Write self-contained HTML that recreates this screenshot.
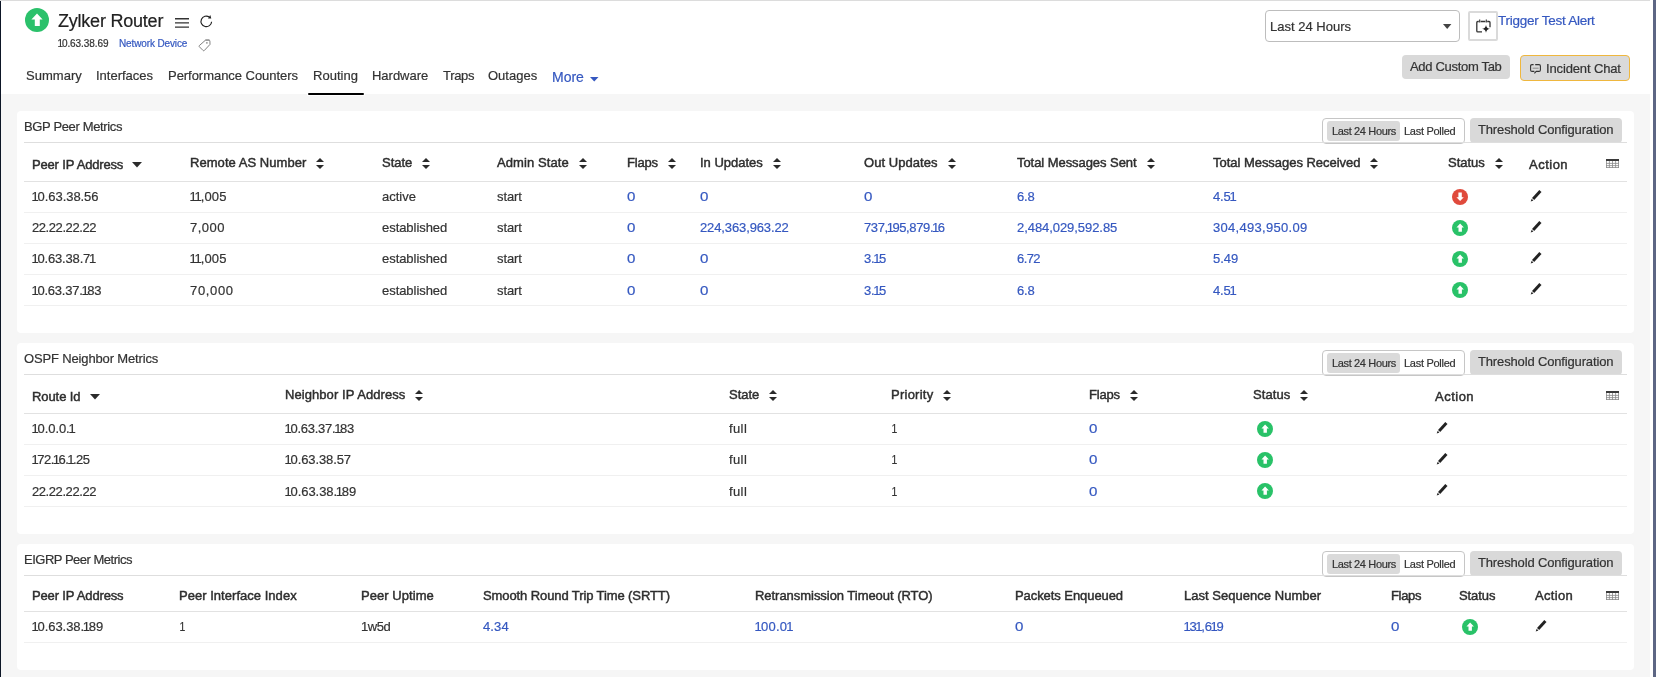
<!DOCTYPE html>
<html lang="en">
<head>
<meta charset="utf-8">
<title>Zylker Router - Routing</title>
<style>
*{box-sizing:border-box;margin:0;padding:0}
html,body{width:1656px;height:677px;overflow:hidden;background:#fff}
body{-webkit-text-stroke:.2px;position:relative;font-family:"Liberation Sans",Arial,sans-serif;font-size:13px;color:#333;-webkit-font-smoothing:antialiased}
span{white-space:nowrap}
.page{position:absolute;left:0;top:0;width:1650px;height:677px;background:#f6f6f6;overflow:hidden;will-change:transform;backface-visibility:hidden}
.topline{position:absolute;left:0;top:0;width:1650px;height:1px;background:#dcdcdc;z-index:5}
.lstrip{position:absolute;left:0;top:1px;width:1px;height:676px;background:#0d1626;z-index:6}
.lstrip2{position:absolute;left:1px;top:1px;width:1px;height:676px;background:rgba(13,22,38,.25);z-index:6}
.rstrip{position:absolute;left:1653px;top:0;width:3px;height:677px;background:#5d6684}
/* header */
.hdr{position:absolute;left:0;top:0;width:1650px;height:94px;background:#fff}
.abs{position:absolute;white-space:nowrap}
.t18{font-size:18px;line-height:22px;color:#222}
.t10{font-size:10px;line-height:12px;color:#333}
.t11{font-size:11px;line-height:14px;color:#333}
.t13{font-size:13px;line-height:16px;color:#333}
.t135{font-size:13.5px;line-height:16px}
.t14{font-size:14px;line-height:18px;color:#333}
.blue{color:#3558c0}
.hb{font-weight:bold;color:#3a3a3a}
.tab{position:absolute;top:68px;font-size:13px;line-height:16px;color:#333}
.tabline{position:absolute;left:308px;top:93px;width:56px;height:2px;background:#000;border-radius:1px;box-shadow:0 1px 0 #fff,-1px 0 0 #fff,1px 0 0 #fff,-1px 1px 0 #fff,1px 1px 0 #fff}
.btn{position:absolute;background:#d9d9d9;border-radius:4px}
/* cards */
.card{position:absolute;left:17px;width:1617px;background:#fff;border-radius:4px}
.ctitle{position:absolute;left:7px;top:0;height:31px;line-height:31px;font-size:13px;color:#333}
.cline{position:absolute;left:7px;top:31px;width:1603px;height:1px;background:#dedede}
.tgl{position:absolute;left:1305px;top:7px;width:143px;height:26px;border:1px solid #c6c6c6;border-radius:4px;background:#fff}
.tgl .on{position:absolute;left:4px;top:2px;width:73px;height:20px;background:#dadada;border-radius:3px}
.tgl>span{position:absolute;top:5px;font-size:11px;line-height:14px;color:#333}
.thr{position:absolute;left:1453px;top:7px;width:152px;height:25px;background:#d9d9d9;border-radius:4px}
.thr>span{position:absolute;left:8px;top:4px;font-size:13px;line-height:16px;color:#333}
table{position:absolute;left:7px;top:32px;width:1603px;border-collapse:separate;border-spacing:0;table-layout:fixed}
th,td{text-align:left;padding:0 0 0 8px;font-weight:normal;white-space:nowrap;overflow:visible;vertical-align:top;position:relative}
th{height:39px;line-height:38px;border-bottom:1px solid #e2e2e2}
td{height:31px;line-height:30px;border-bottom:1px solid #f0f0f0}
tr.last td>span{position:relative;top:1px}
.n1{margin:0 -1.2px}
.nf{margin-left:-.4px}
.o{display:inline-block;transform:scaleX(.8);transform-origin:30% 50%}
.z{display:inline-block;transform:scaleX(1.16);transform-origin:0 50%}
.c3 th{height:36px;line-height:35px}
.c3 .h{top:2px}
.h{font-weight:normal;color:#2e2e2e;-webkit-text-stroke:.45px #2e2e2e;position:relative;top:1px}
.lo{top:3px}
.v{color:#3558c0}
.sort{display:inline-block;width:8px;height:11px;margin-left:10px;vertical-align:-1px;position:relative;top:2px}
.caret{display:inline-block;width:10px;height:6px;margin-left:9px;vertical-align:1px;position:relative;top:3px}
.st{position:absolute;left:12px;top:7px;width:16px;height:16px}
.pen{position:absolute;left:9px;top:8.3px;width:12px;height:12px}
.c3 .pen{left:8.3px}
.c3 .st{left:10.7px}
.grid{position:absolute;left:8px;width:13px;height:9px}
svg{display:block;overflow:visible}
</style>
</head>
<body>
<div class="page">
<header class="hdr">
<svg class="abs" style="left:25px;top:8px" width="24" height="24" viewBox="0 0 24 24" aria-hidden="true"><circle cx="12" cy="12" r="12" fill="#2bc16b"/><path d="M12 5.6 17.6 11.4H14.8V18H9.8V11.4H6.4z" fill="#fff"/></svg>
<h1 class="abs t18" style="left:58px;top:10px;font-weight:normal"><span class="t18" style="letter-spacing:-0.22px">Zylker Router</span></h1>
<svg class="abs" style="left:175px;top:18px" width="14" height="10" viewBox="0 0 14 10" aria-hidden="true"><path d="M0 .7H14M0 4.9H14M0 9.1H14" stroke="#333" stroke-width="1.4"/></svg>
<svg class="abs" style="left:200px;top:15px" width="13" height="13" viewBox="0 0 13 13" aria-hidden="true"><path d="M11.6 6.7A5.3 5.3 0 1 1 9.3 2" fill="none" stroke="#222" stroke-width="1.15"/><path d="M10.3 0 11.3 3.5 8 3.6z" fill="#222"/></svg>
<div class="abs t10" style="left:58px;top:38px"><span class="t10" style="letter-spacing:-0.07px"><span class="n1 nf">1</span>0.63.38.69</span></div>
<div class="abs t10" style="left:119px;top:38px"><span class="t10 blue" style="letter-spacing:-0.13px">Network Device</span></div>
<svg class="abs" style="left:198px;top:39px" width="13" height="13" viewBox="0 0 13 13" aria-hidden="true"><path d="M7.3 1.3 11 1.2Q11.9 1.2 11.9 2.1L12 5.4 6.3 11.5Q5.7 12.1 5.1 11.5L1.3 7.7Q.8 7.1 1.3 6.6z" fill="none" stroke="#808080" stroke-width="1" stroke-linejoin="round"/><path d="M7.4 .9H11.4" stroke="#9a9a9a" stroke-width="1.3"/><circle cx="8.9" cy="3.9" r=".8" fill="#808080"/></svg>
<nav>
<span class="tab" style="left:26px"><span style="letter-spacing:0.03px">Summary</span></span>
<span class="tab" style="left:96px"><span>Interfaces</span></span>
<span class="tab" style="left:168px"><span style="letter-spacing:-0.04px">Performance Counters</span></span>
<span class="tab" style="left:313px"><span style="letter-spacing:0.03px">Routing</span></span>
<span class="tab" style="left:372px"><span style="letter-spacing:-0.02px">Hardware</span></span>
<span class="tab" style="left:443px"><span style="letter-spacing:-0.31px">Traps</span></span>
<span class="tab" style="left:488px"><span style="letter-spacing:0.01px">Outages</span></span>
<span class="tab blue" style="left:552px;top:68px;font-size:14px;line-height:18px"><span class="t14 blue">More</span></span>
<svg class="abs" style="left:589.5px;top:76.7px" width="8.5" height="4.5" viewBox="0 0 8.5 4.5" aria-hidden="true"><path d="M0 0H8.5L4.25 4.5z" fill="#3558c0"/></svg>
<div class="tabline"></div>
</nav>
<div class="abs" style="left:1265px;top:10px;width:195px;height:32px;border:1px solid #bdbdbd;border-radius:4px;background:#fff">
<span class="abs t13" style="left:4px;top:8px"><span class="t13" style="letter-spacing:0.01px">Last 24 Hours</span></span>
<svg class="abs" style="left:177px;top:13px" width="8.4" height="5" viewBox="0 0 8.4 5" aria-hidden="true"><path d="M0 0H8.4L4.2 5z" fill="#444"/></svg>
</div>
<div class="abs" style="left:1468px;top:11px;width:30px;height:30px;border:2px solid #dadada;border-radius:2px;background:#fff">
<svg class="abs" style="left:6px;top:6px" width="16" height="15" viewBox="0 0 16 15" aria-hidden="true"><path d="M6 12.9H1.8Q.8 12.9 .8 11.9V3.5Q.8 2.5 1.8 2.5H2.8M4.6 2.5H9.4M11.2 2.5H13Q14 2.5 14 3.5V8.3" fill="none" stroke="#333" stroke-width="1.3"/><path d="M3.7 .5V3.5M10.3 .5V3.5" stroke="#333" stroke-width="1.1"/><path d="M10 5.9Q10.5 9.2 13.9 9.8Q10.5 10.4 10 13.7Q9.5 10.4 6.1 9.8Q9.5 9.2 10 5.9z" fill="#222"/></svg>
</div>
<span class="abs t135 blue" style="left:1498px;top:13px"><span class="t135 blue" style="letter-spacing:-0.26px">Trigger Test Alert</span></span>
<div class="btn" style="left:1402px;top:55px;width:108px;height:24px"><span class="abs t13" style="left:8px;top:4px"><span class="t13" style="letter-spacing:-0.31px">Add Custom Tab</span></span></div>
<div class="btn" style="left:1520px;top:55px;width:110px;height:26px;border:1.3px solid #efb73e;background:#dadada">
<svg class="abs" style="left:8.5px;top:7.8px" width="11" height="10" viewBox="0 0 11 10" aria-hidden="true"><path d="M3.6 .6H2Q.6 .6 .6 2V6Q.6 7.4 2 7.4H4.4M5.2 .6H9Q10.4 .6 10.4 2V6Q10.4 7.4 9 7.4H6.2L4.4 9.4" fill="none" stroke="#333" stroke-width="1.1" stroke-linejoin="round"/><path d="M2.6 4.2H8.6" stroke="#888" stroke-width="1"/></svg>
<span class="abs t13" style="left:25px;top:4.5px"><span class="t13" style="letter-spacing:-0.14px">Incident Chat</span></span>
</div>
</header>
<section class="card c1" style="top:111px;height:222px">
<div class="ctitle"><span style="letter-spacing:-0.36px">BGP Peer Metrics</span></div>
<div class="tgl"><div class="on"></div><span style="left:9px"><span class="t11" style="letter-spacing:-0.35px">Last 24 Hours</span></span><span style="left:81px"><span class="t11" style="letter-spacing:-0.28px">Last Polled</span></span></div>
<div class="thr"><span><span style="letter-spacing:-0.15px">Threshold Configuration</span></span></div>
<div class="cline"></div>
<table><colgroup>
<col style="width:158px">
<col style="width:192px">
<col style="width:115px">
<col style="width:130px">
<col style="width:73px">
<col style="width:164px">
<col style="width:153px">
<col style="width:196px">
<col style="width:235px">
<col style="width:81px">
<col style="width:77px">
<col style="width:29px">
</colgroup><thead><tr>
<th><span class="h lo" style="letter-spacing:-0.17px">Peer IP Address</span><svg class="caret" viewBox="0 0 10 6" aria-hidden="true"><path d="M0 0h10L5 5.6z" fill="#2b2b2b"/></svg></th>
<th><span class="h" style="letter-spacing:0.05px">Remote AS Number</span><svg class="sort" viewBox="0 0 8 11" aria-hidden="true"><path d="M4 0 8 4H0zM0 7h8L4 11z" fill="#2b2b2b"/></svg></th>
<th><span class="h" style="letter-spacing:-0.04px">State</span><svg class="sort" viewBox="0 0 8 11" aria-hidden="true"><path d="M4 0 8 4H0zM0 7h8L4 11z" fill="#2b2b2b"/></svg></th>
<th><span class="h" style="letter-spacing:0.10px">Admin State</span><svg class="sort" viewBox="0 0 8 11" aria-hidden="true"><path d="M4 0 8 4H0zM0 7h8L4 11z" fill="#2b2b2b"/></svg></th>
<th><span class="h" style="letter-spacing:-0.17px">Flaps</span><svg class="sort" viewBox="0 0 8 11" aria-hidden="true"><path d="M4 0 8 4H0zM0 7h8L4 11z" fill="#2b2b2b"/></svg></th>
<th><span class="h" style="letter-spacing:-0.01px">In Updates</span><svg class="sort" viewBox="0 0 8 11" aria-hidden="true"><path d="M4 0 8 4H0zM0 7h8L4 11z" fill="#2b2b2b"/></svg></th>
<th><span class="h" style="letter-spacing:0.06px">Out Updates</span><svg class="sort" viewBox="0 0 8 11" aria-hidden="true"><path d="M4 0 8 4H0zM0 7h8L4 11z" fill="#2b2b2b"/></svg></th>
<th><span class="h" style="letter-spacing:-0.06px">Total Messages Sent</span><svg class="sort" viewBox="0 0 8 11" aria-hidden="true"><path d="M4 0 8 4H0zM0 7h8L4 11z" fill="#2b2b2b"/></svg></th>
<th><span class="h" style="letter-spacing:-0.03px">Total Messages Received</span><svg class="sort" viewBox="0 0 8 11" aria-hidden="true"><path d="M4 0 8 4H0zM0 7h8L4 11z" fill="#2b2b2b"/></svg></th>
<th><span class="h" style="letter-spacing:-0.03px">Status</span><svg class="sort" viewBox="0 0 8 11" aria-hidden="true"><path d="M4 0 8 4H0zM0 7h8L4 11z" fill="#2b2b2b"/></svg></th>
<th><span class="h lo" style="letter-spacing:0.49px">Action</span></th>
<th><svg class="grid" style="top:16px" viewBox="0 0 13 9" aria-hidden="true"><rect x="0.4" y="0.4" width="12.2" height="8.2" fill="#fff" stroke="#8a8a8a" stroke-width=".8"/><rect x="0" y="0" width="13" height="2" fill="#3a3a3a"/><path d="M3.4 2V9M6.5 2V9M9.6 2V9M0 4.4H13M0 6.6H13" stroke="#8a8a8a" stroke-width=".8" fill="none"/></svg></th>
</tr></thead><tbody>
<tr>
<td><span style="letter-spacing:-0.06px"><span class="n1 nf">1</span>0.63.38.56</span></td>
<td><span style="letter-spacing:0.11px"><span class="n1 nf">1</span><span class="n1">1</span>,005</span></td>
<td><span style="letter-spacing:-0.01px">active</span></td>
<td><span style="letter-spacing:-0.10px">start</span></td>
<td><span class="v z">0</span></td>
<td><span class="v z">0</span></td>
<td><span class="v z">0</span></td>
<td><span class="v" style="letter-spacing:-0.19px">6.8</span></td>
<td><span class="v" style="letter-spacing:-0.11px">4.5<span class="n1">1</span></span></td>
<td><svg class="st" viewBox="0 0 16 16" aria-hidden="true"><circle cx="8" cy="8" r="8" fill="#e04a3c"/><path d="M8.1 12.1 4.4 8.3H6.4V3.5H9.8V8.3H11.8z" fill="#fff"/></svg></td>
<td><svg class="pen" viewBox="0 0 12 12" aria-hidden="true"><path d="M9.3 0 11.5 2.1 4.2 10 2 8z" fill="#222"/><path d="M1.7 8.8 3.4 10.4 0.7 11.6z" fill="#222"/></svg></td>
<td></td>
</tr>
<tr>
<td><span style="letter-spacing:-0.42px">22.22.22.22</span></td>
<td><span style="letter-spacing:0.49px">7,000</span></td>
<td><span style="letter-spacing:-0.05px">established</span></td>
<td><span style="letter-spacing:-0.10px">start</span></td>
<td><span class="v z">0</span></td>
<td><span class="v" style="letter-spacing:-0.12px">224,363,963.22</span></td>
<td><span class="v" style="letter-spacing:-0.36px">737,<span class="n1">1</span>95,879.<span class="n1">1</span>6</span></td>
<td><span class="v" style="letter-spacing:-0.06px">2,484,029,592.85</span></td>
<td><span class="v" style="letter-spacing:0.30px">304,493,950.09</span></td>
<td><svg class="st" viewBox="0 0 16 16" aria-hidden="true"><circle cx="8" cy="8" r="8" fill="#29c268"/><path d="M8.1 3.6 11.9 7.4H9.9V11.8H6.5V7.4H4.5z" fill="#fff"/></svg></td>
<td><svg class="pen" viewBox="0 0 12 12" aria-hidden="true"><path d="M9.3 0 11.5 2.1 4.2 10 2 8z" fill="#222"/><path d="M1.7 8.8 3.4 10.4 0.7 11.6z" fill="#222"/></svg></td>
<td></td>
</tr>
<tr>
<td><span style="letter-spacing:-0.17px"><span class="n1 nf">1</span>0.63.38.7<span class="n1">1</span></span></td>
<td><span style="letter-spacing:0.11px"><span class="n1 nf">1</span><span class="n1">1</span>,005</span></td>
<td><span style="letter-spacing:-0.05px">established</span></td>
<td><span style="letter-spacing:-0.10px">start</span></td>
<td><span class="v z">0</span></td>
<td><span class="v z">0</span></td>
<td><span class="v" style="letter-spacing:-0.21px">3.<span class="n1">1</span>5</span></td>
<td><span class="v" style="letter-spacing:-0.57px">6.72</span></td>
<td><span class="v">5.49</span></td>
<td><svg class="st" viewBox="0 0 16 16" aria-hidden="true"><circle cx="8" cy="8" r="8" fill="#29c268"/><path d="M8.1 3.6 11.9 7.4H9.9V11.8H6.5V7.4H4.5z" fill="#fff"/></svg></td>
<td><svg class="pen" viewBox="0 0 12 12" aria-hidden="true"><path d="M9.3 0 11.5 2.1 4.2 10 2 8z" fill="#222"/><path d="M1.7 8.8 3.4 10.4 0.7 11.6z" fill="#222"/></svg></td>
<td></td>
</tr>
<tr class="last">
<td><span style="letter-spacing:-0.23px"><span class="n1 nf">1</span>0.63.37.<span class="n1">1</span>83</span></td>
<td><span style="letter-spacing:0.65px">70,000</span></td>
<td><span style="letter-spacing:-0.05px">established</span></td>
<td><span style="letter-spacing:-0.10px">start</span></td>
<td><span class="v z">0</span></td>
<td><span class="v z">0</span></td>
<td><span class="v" style="letter-spacing:-0.21px">3.<span class="n1">1</span>5</span></td>
<td><span class="v" style="letter-spacing:-0.19px">6.8</span></td>
<td><span class="v" style="letter-spacing:-0.11px">4.5<span class="n1">1</span></span></td>
<td><svg class="st" viewBox="0 0 16 16" aria-hidden="true"><circle cx="8" cy="8" r="8" fill="#29c268"/><path d="M8.1 3.6 11.9 7.4H9.9V11.8H6.5V7.4H4.5z" fill="#fff"/></svg></td>
<td><svg class="pen" viewBox="0 0 12 12" aria-hidden="true"><path d="M9.3 0 11.5 2.1 4.2 10 2 8z" fill="#222"/><path d="M1.7 8.8 3.4 10.4 0.7 11.6z" fill="#222"/></svg></td>
<td></td>
</tr>
</tbody></table></section>
<section class="card c2" style="top:343px;height:191px">
<div class="ctitle"><span style="letter-spacing:-0.15px">OSPF Neighbor Metrics</span></div>
<div class="tgl"><div class="on"></div><span style="left:9px"><span class="t11" style="letter-spacing:-0.35px">Last 24 Hours</span></span><span style="left:81px"><span class="t11" style="letter-spacing:-0.28px">Last Polled</span></span></div>
<div class="thr"><span><span style="letter-spacing:-0.15px">Threshold Configuration</span></span></div>
<div class="cline"></div>
<table><colgroup>
<col style="width:253px">
<col style="width:444px">
<col style="width:162px">
<col style="width:198px">
<col style="width:164px">
<col style="width:182px">
<col style="width:171px">
<col style="width:29px">
</colgroup><thead><tr>
<th><span class="h lo" style="letter-spacing:-0.08px">Route Id</span><svg class="caret" viewBox="0 0 10 6" aria-hidden="true"><path d="M0 0h10L5 5.6z" fill="#2b2b2b"/></svg></th>
<th><span class="h" style="letter-spacing:0.07px">Neighbor IP Address</span><svg class="sort" viewBox="0 0 8 11" aria-hidden="true"><path d="M4 0 8 4H0zM0 7h8L4 11z" fill="#2b2b2b"/></svg></th>
<th><span class="h" style="letter-spacing:-0.01px">State</span><svg class="sort" viewBox="0 0 8 11" aria-hidden="true"><path d="M4 0 8 4H0zM0 7h8L4 11z" fill="#2b2b2b"/></svg></th>
<th><span class="h" style="letter-spacing:0.25px">Priority</span><svg class="sort" viewBox="0 0 8 11" aria-hidden="true"><path d="M4 0 8 4H0zM0 7h8L4 11z" fill="#2b2b2b"/></svg></th>
<th><span class="h" style="letter-spacing:-0.17px">Flaps</span><svg class="sort" viewBox="0 0 8 11" aria-hidden="true"><path d="M4 0 8 4H0zM0 7h8L4 11z" fill="#2b2b2b"/></svg></th>
<th><span class="h" style="letter-spacing:0.07px">Status</span><svg class="sort" viewBox="0 0 8 11" aria-hidden="true"><path d="M4 0 8 4H0zM0 7h8L4 11z" fill="#2b2b2b"/></svg></th>
<th><span class="h lo" style="letter-spacing:0.49px">Action</span></th>
<th><svg class="grid" style="top:16px" viewBox="0 0 13 9" aria-hidden="true"><rect x="0.4" y="0.4" width="12.2" height="8.2" fill="#fff" stroke="#8a8a8a" stroke-width=".8"/><rect x="0" y="0" width="13" height="2" fill="#3a3a3a"/><path d="M3.4 2V9M6.5 2V9M9.6 2V9M0 4.4H13M0 6.6H13" stroke="#8a8a8a" stroke-width=".8" fill="none"/></svg></th>
</tr></thead><tbody>
<tr>
<td><span style="letter-spacing:-0.08px"><span class="n1 nf">1</span>0.0.0.<span class="n1">1</span></span></td>
<td><span style="letter-spacing:-0.26px"><span class="n1 nf">1</span>0.63.37.<span class="n1">1</span>83</span></td>
<td><span style="letter-spacing:0.39px">full</span></td>
<td><span class="o">1</span></td>
<td><span class="v z">0</span></td>
<td><svg class="st" viewBox="0 0 16 16" aria-hidden="true"><circle cx="8" cy="8" r="8" fill="#29c268"/><path d="M8.1 3.6 11.9 7.4H9.9V11.8H6.5V7.4H4.5z" fill="#fff"/></svg></td>
<td><svg class="pen" viewBox="0 0 12 12" aria-hidden="true"><path d="M9.3 0 11.5 2.1 4.2 10 2 8z" fill="#222"/><path d="M1.7 8.8 3.4 10.4 0.7 11.6z" fill="#222"/></svg></td>
<td></td>
</tr>
<tr>
<td><span style="letter-spacing:-0.43px"><span class="n1 nf">1</span>72.<span class="n1">1</span>6.<span class="n1">1</span>.25</span></td>
<td><span style="letter-spacing:-0.11px"><span class="n1 nf">1</span>0.63.38.57</span></td>
<td><span style="letter-spacing:0.39px">full</span></td>
<td><span class="o">1</span></td>
<td><span class="v z">0</span></td>
<td><svg class="st" viewBox="0 0 16 16" aria-hidden="true"><circle cx="8" cy="8" r="8" fill="#29c268"/><path d="M8.1 3.6 11.9 7.4H9.9V11.8H6.5V7.4H4.5z" fill="#fff"/></svg></td>
<td><svg class="pen" viewBox="0 0 12 12" aria-hidden="true"><path d="M9.3 0 11.5 2.1 4.2 10 2 8z" fill="#222"/><path d="M1.7 8.8 3.4 10.4 0.7 11.6z" fill="#222"/></svg></td>
<td></td>
</tr>
<tr class="last">
<td><span style="letter-spacing:-0.42px">22.22.22.22</span></td>
<td><span style="letter-spacing:-0.07px"><span class="n1 nf">1</span>0.63.38.<span class="n1">1</span>89</span></td>
<td><span style="letter-spacing:0.39px">full</span></td>
<td><span class="o">1</span></td>
<td><span class="v z">0</span></td>
<td><svg class="st" viewBox="0 0 16 16" aria-hidden="true"><circle cx="8" cy="8" r="8" fill="#29c268"/><path d="M8.1 3.6 11.9 7.4H9.9V11.8H6.5V7.4H4.5z" fill="#fff"/></svg></td>
<td><svg class="pen" viewBox="0 0 12 12" aria-hidden="true"><path d="M9.3 0 11.5 2.1 4.2 10 2 8z" fill="#222"/><path d="M1.7 8.8 3.4 10.4 0.7 11.6z" fill="#222"/></svg></td>
<td></td>
</tr>
</tbody></table></section>
<section class="card c3" style="top:544px;height:126px">
<div class="ctitle"><span style="letter-spacing:-0.49px">EIGRP Peer Metrics</span></div>
<div class="tgl"><div class="on"></div><span style="left:9px"><span class="t11" style="letter-spacing:-0.35px">Last 24 Hours</span></span><span style="left:81px"><span class="t11" style="letter-spacing:-0.28px">Last Polled</span></span></div>
<div class="thr"><span><span style="letter-spacing:-0.15px">Threshold Configuration</span></span></div>
<div class="cline"></div>
<table><colgroup>
<col style="width:147px">
<col style="width:182px">
<col style="width:122px">
<col style="width:272px">
<col style="width:260px">
<col style="width:169px">
<col style="width:207px">
<col style="width:68px">
<col style="width:76px">
<col style="width:71px">
<col style="width:29px">
</colgroup><thead><tr>
<th><span class="h" style="letter-spacing:-0.15px">Peer IP Address</span></th>
<th><span class="h" style="letter-spacing:0.03px">Peer Interface Index</span></th>
<th><span class="h" style="letter-spacing:0.05px">Peer Uptime</span></th>
<th><span class="h" style="letter-spacing:-0.10px">Smooth Round Trip Time (SRTT)</span></th>
<th><span class="h" style="letter-spacing:-0.04px">Retransmission Timeout (RTO)</span></th>
<th><span class="h" style="letter-spacing:-0.07px">Packets Enqueued</span></th>
<th><span class="h" style="letter-spacing:0.03px">Last Sequence Number</span></th>
<th><span class="h" style="letter-spacing:-0.32px">Flaps</span></th>
<th><span class="h" style="letter-spacing:-0.09px">Status</span></th>
<th><span class="h" style="letter-spacing:0.31px">Action</span></th>
<th><svg class="grid" style="top:15px" viewBox="0 0 13 9" aria-hidden="true"><rect x="0.4" y="0.4" width="12.2" height="8.2" fill="#fff" stroke="#8a8a8a" stroke-width=".8"/><rect x="0" y="0" width="13" height="2" fill="#3a3a3a"/><path d="M3.4 2V9M6.5 2V9M9.6 2V9M0 4.4H13M0 6.6H13" stroke="#8a8a8a" stroke-width=".8" fill="none"/></svg></th>
</tr></thead><tbody>
<tr>
<td><span style="letter-spacing:-0.07px"><span class="n1 nf">1</span>0.63.38.<span class="n1">1</span>89</span></td>
<td><span class="o">1</span></td>
<td><span style="letter-spacing:-0.46px">1w5d</span></td>
<td><span class="v" style="letter-spacing:0.13px">4.34</span></td>
<td><span class="v" style="letter-spacing:0.27px"><span class="n1 nf">1</span>00.0<span class="n1">1</span></span></td>
<td><span class="v z">0</span></td>
<td><span class="v" style="letter-spacing:-0.18px"><span class="n1 nf">1</span>3<span class="n1">1</span>,6<span class="n1">1</span>9</span></td>
<td><span class="v z">0</span></td>
<td><svg class="st" viewBox="0 0 16 16" aria-hidden="true"><circle cx="8" cy="8" r="8" fill="#29c268"/><path d="M8.1 3.6 11.9 7.4H9.9V11.8H6.5V7.4H4.5z" fill="#fff"/></svg></td>
<td><svg class="pen" viewBox="0 0 12 12" aria-hidden="true"><path d="M9.3 0 11.5 2.1 4.2 10 2 8z" fill="#222"/><path d="M1.7 8.8 3.4 10.4 0.7 11.6z" fill="#222"/></svg></td>
<td></td>
</tr>
</tbody></table></section>
</div>
<div class="topline"></div>
<div class="lstrip"></div>
<div class="rstrip"></div>
</body>
</html>
